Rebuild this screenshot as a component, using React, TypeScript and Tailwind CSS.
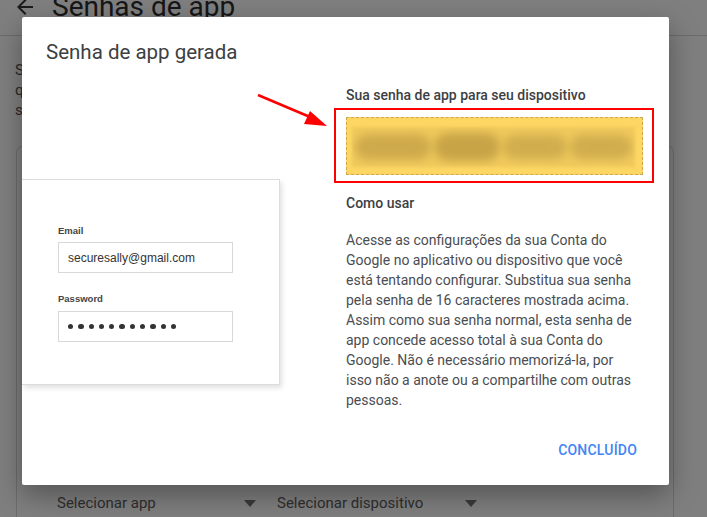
import React from 'react';

const roboto = { fontFamily: 'Roboto, "Noto Sans", sans-serif' };

const BackgroundPage: React.FC = () => (
  <div className="h-full w-full bg-[#7f7f7f]" style={roboto}>
    <div className="flex h-[36px] items-start border-b border-[#6c6c6c]">
      <svg className="ml-[13px] mt-[-5px] h-[24px] w-[24px]" viewBox="0 0 24 24" fill="#1c1c1c">
        <path d="M20 11H7.83l5.59-5.59L12 4l-8 8 8 8 1.41-1.41L7.83 13H20v-2z" />
      </svg>
      <div className="ml-[15px] mt-[-10px] text-[28px] leading-[34px] text-[#161616]">Senhas de app</div>
    </div>
    <div className="pl-[15px] pt-[24px] text-[15px] leading-[20px] text-[#2a2a2a]">
      <div>Senhas de app permitem que você faça login</div>
      <div>que não são compatíveis com a verificação</div>
      <div>só precisa inserir essa senha uma vez.</div>
    </div>
    <div className="ml-[16px] mr-[33px] mt-[25px] flex h-[400px] flex-col rounded-t-[8px] border border-[#6c6c6c]">
      <div className="mt-[346px] flex items-center text-[15px] text-[#2e2e2e]">
        <span className="ml-[40px] w-[187px]">Selecionar app</span>
        <span className="h-0 w-0 border-x-[6px] border-t-[7px] border-x-transparent border-t-[#3a3a3a]" />
        <span className="ml-[21px] w-[188px]">Selecionar dispositivo</span>
        <span className="h-0 w-0 border-x-[6px] border-t-[7px] border-x-transparent border-t-[#3a3a3a]" />
      </div>
    </div>
  </div>
);

const LoginPreview: React.FC = () => (
  <div
    className="h-[206px] w-[258px] border-y border-r border-[#dcdcdc] bg-white pl-[36px] shadow-[2px_3px_5px_rgba(0,0,0,0.12)]"
    style={{ fontFamily: '"Liberation Sans", Arial, sans-serif' }}
  >
    <div className="mt-[45px] text-[9.5px] font-bold leading-[12px] text-[#444]">Email</div>
    <div className="mt-[5px] flex h-[31px] w-[175px] items-center border border-[#d8d8d8] pl-[9px] text-[12px] text-[#333]">
      securesally@gmail.com
    </div>
    <div className="mt-[20px] text-[9.5px] font-bold leading-[12px] text-[#444]">Password</div>
    <div className="mt-[6px] flex h-[31px] w-[175px] items-center gap-[5px] border border-[#d8d8d8] pl-[9px]">
      {Array.from({ length: 11 }).map((_, i) => (
        <span key={i} className="h-[5.3px] w-[5.3px] rounded-full bg-[#333]" />
      ))}
    </div>
  </div>
);

const BlurredPassword: React.FC = () => (
  <div className="h-[58px] border border-dashed border-[#caa94f] bg-[#fdd663] pb-[7px] pl-[5px] pr-[7px] pt-[9px]">
    <div className="relative h-full w-full overflow-hidden bg-[#f0ca5c] blur-[1.5px]">
      <div className="flex h-full items-center justify-around px-[2px]">
        <span className="h-[26px] w-[76px] rounded-full bg-[#cfaa4c] blur-[4px]" />
        <span className="h-[28px] w-[66px] rounded-full bg-[#c9a447] blur-[4px]" />
        <span className="h-[24px] w-[64px] rounded-full bg-[#d1ad4e] blur-[4px]" />
        <span className="h-[24px] w-[62px] rounded-full bg-[#d1ad4e] blur-[4px]" />
      </div>
    </div>
  </div>
);

const App: React.FC = () => {
  return (
    <div className="relative h-[517px] w-full overflow-hidden">
      <BackgroundPage />

      <div
        className="absolute left-[22px] top-[17px] flex h-[468px] w-[647px] flex-col rounded-[2px] bg-white shadow-[0_10px_28px_rgba(0,0,0,0.35)]"
        style={roboto}
      >
        <h2 className="pl-[24px] pt-[21px] text-[20.5px] leading-[28px] text-[#3c4043]">Senha de app gerada</h2>

        <div className="mt-[19px] flex">
          <div className="w-[258px] pt-[94px]">
            <LoginPreview />
          </div>

          <div className="ml-[54px] w-[320px]">
            <div className="pl-[12px] text-[14px] font-medium leading-[20px] text-[#3c4043]">
              Sua senha de app para seu dispositivo
            </div>
            <div className="mt-[3px] border-2 border-[#f00] pb-[6px] pl-[10px] pr-[9px] pt-[7px]">
              <BlurredPassword />
            </div>
            <div className="mt-[10px] pl-[12px] text-[14px] font-medium leading-[20px] text-[#3c4043]">Como usar</div>
            <p className="mt-[17px] w-[307px] pl-[12px] text-[14px] leading-[20px] text-[#4a4d52]">
              Acesse as configurações da sua Conta do Google no aplicativo ou dispositivo que você está tentando
              configurar. Substitua sua senha pela senha de 16 caracteres mostrada acima. Assim como sua senha normal,
              esta senha de app concede acesso total à sua Conta do Google. Não é necessário memorizá-la, por isso não a
              anote ou a compartilhe com outras pessoas.
            </p>
          </div>
        </div>

        <div className="mt-[30px] flex justify-end pr-[32px]">
          <button className="text-[14px] font-medium leading-[20px] tracking-[0.2px] text-[#4285f4]">CONCLUÍDO</button>
        </div>
      </div>

      {/* arrow annotation */}
      <svg className="absolute left-0 top-0" width="707" height="517" viewBox="0 0 707 517">
        <line x1="258" y1="95" x2="310" y2="117" stroke="#f00" strokeWidth="2.5" />
        <polygon points="327,126 304,124 310,111" fill="#f00" />
      </svg>
    </div>
  );
};

export default App;
